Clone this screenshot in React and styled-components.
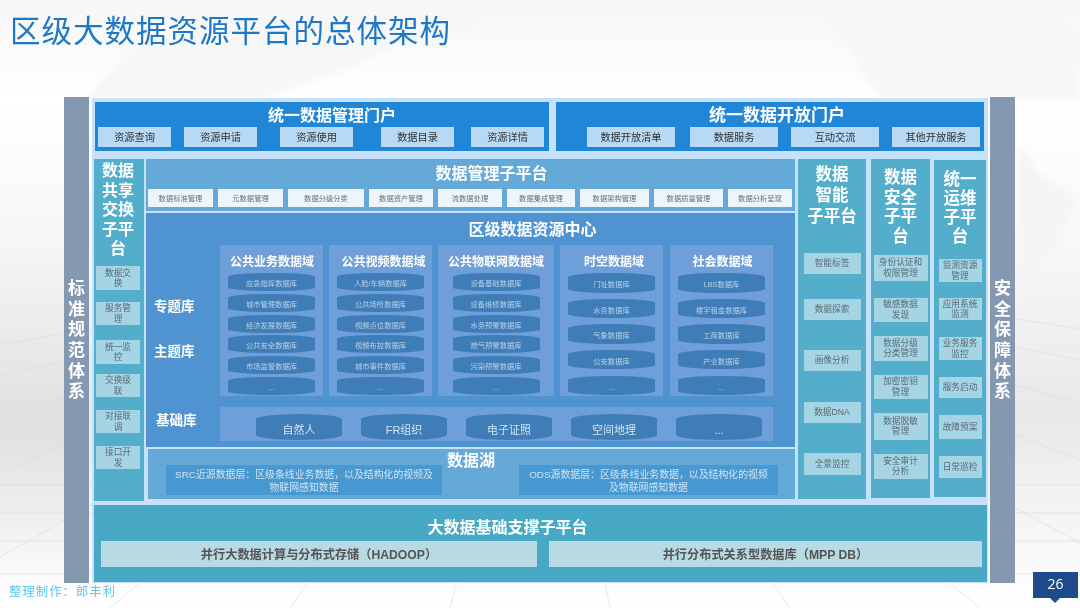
import React from 'react';
import styled, { createGlobalStyle } from 'styled-components';

const GlobalStyle = createGlobalStyle`
    html, body {
        margin: 0;
        padding: 0;
        background: #fff;
    }
    body {
        font-family: "Liberation Sans", "Noto Sans CJK SC", sans-serif;
    }
`;

const Page = styled.div`
    position: relative;
    width: 1080px;
    height: 608px;
    overflow: hidden;
    background: #fff;
    filter: blur(0.35px);
`;

const Backdrop = styled.svg`
    position: absolute;
    left: 0;
    top: 0;
`;

const Heading = styled.h1`
    position: relative;
    height: 97px;
    margin: 0;
    padding-left: 10px;
    box-sizing: border-box;
    font-size: 30.5px;
    line-height: 62px;
    font-weight: 400;
    letter-spacing: 1px;
    color: #1d78c8;
`;

const Frame = styled.div`
    position: relative;
    display: flex;
    width: 951px;
    height: 486px;
    margin-left: 64px;
`;

const SideBar = styled.div`
    width: 25px;
    flex: none;
    display: flex;
    flex-direction: column;
    align-items: center;
    justify-content: center;
    padding-top: 2px;
    box-sizing: border-box;
    background: #8598b2;
    color: #fff;
    font-size: 17px;
    font-weight: 700;
    line-height: 20.7px;
`;

const Center = styled.div`
    width: 896px;
    flex: none;
    margin: 1px 2px 0 3px;
    padding: 4px 1px 1px 2px;
    box-sizing: border-box;
    background: #c6e1fb;
`;

const TopRow = styled.div`
    display: flex;
    margin-left: 1px;
    height: 49px;
`;

const Portal = styled.div`
    width: ${p => p.$w}px;
    margin-left: ${p => p.$ml || 0}px;
    background: #1f86d8;
`;

const PortalTitle = styled.div`
    height: 25px;
    padding-left: ${p => p.$pl}px;
    text-align: center;
    font-size: ${p => p.$size}px;
    line-height: 27px;
    font-weight: 700;
    color: #fff;
`;

const PortalChips = styled.div`
    display: flex;
`;

const PortalChip = styled.div`
    width: ${p => p.$w}px;
    height: 20px;
    margin-left: ${p => p.$ml}px;
    background: #b8d9f3;
    color: #333;
    font-size: 10.2px;
    line-height: 21px;
    text-align: center;
`;

const MiddleRow = styled.div`
    display: flex;
    align-items: flex-start;
    margin-top: 8px;
    height: 340px;
`;

const SidePanel = styled.div`
    flex: none;
    display: flex;
    flex-direction: column;
    align-items: center;
    width: ${p => p.$w}px;
    height: ${p => p.$h}px;
    margin-left: ${p => p.$ml || 0}px;
    margin-top: ${p => p.$mt || 0}px;
    padding-top: ${p => p.$pt}px;
    padding-right: ${p => p.$pr || 0}px;
    box-sizing: border-box;
    background: #53aecb;
`;

const SideTitle = styled.div`
    font-size: ${p => p.$size}px;
    line-height: ${p => p.$lh}px;
    font-weight: 700;
    color: #fff;
    text-align: center;
`;

const SideChip = styled.div`
    display: flex;
    align-items: center;
    justify-content: center;
    flex: none;
    box-sizing: border-box;
    width: ${p => p.$w}px;
    height: ${p => p.$h}px;
    margin-top: ${p => p.$gap}px;
    background: #a5d4e4;
    color: #5b6a74;
    font-size: 8.7px;
    line-height: 10.5px;
    text-align: center;
    white-space: pre-line;
`;

const MainColumn = styled.div`
    flex: none;
    width: 649px;
    margin-left: 2px;
    display: flex;
    flex-direction: column;
    gap: 2px;
`;

const Management = styled.div`
    height: 52px;
    background: #65a9d8;
    padding: 0 2px;
    box-sizing: border-box;
`;

const BandTitle = styled.div`
    padding-left: ${p => p.$pl || 0}px;
    padding-right: ${p => p.$pr || 0}px;
    text-align: center;
    color: #fff;
    font-size: 16px;
    font-weight: 700;
`;

const ManagementTitle = styled(BandTitle)`
    height: 30px;
    line-height: 29px;
`;

const ManagementChips = styled.div`
    display: flex;
    gap: 5px;
`;

const ManagementChip = styled.div`
    width: ${p => p.$w}px;
    height: 18px;
    background: #edf4fb;
    color: #6a6f75;
    font-size: 7.3px;
    line-height: 19px;
    text-align: center;
`;

const ResourceCenter = styled.div`
    height: 234px;
    background: #4f93d1;
`;

const ResourceTitle = styled(BandTitle)`
    height: 32px;
    line-height: 33px;
`;

const ResourceRow = styled.div`
    display: flex;
`;

const LabelColumn = styled.div`
    width: 74px;
    flex: none;
`;

const ShelfLabel = styled.div`
    color: #fff;
    font-size: 13.5px;
    font-weight: 700;
    line-height: 20px;
    margin-left: ${p => p.$ml}px;
    margin-top: ${p => p.$mt}px;
`;

const Domains = styled.div`
    display: flex;
`;

const Domain = styled.div`
    width: ${p => p.$w}px;
    height: 151px;
    margin-left: ${p => p.$ml || 0}px;
    background: #6f9fd8;
    display: flex;
    flex-direction: column;
    align-items: center;
`;

const DomainTitle = styled.div`
    height: 28px;
    padding: 6px 0 0 ${p => p.$pl || 0}px;
    box-sizing: border-box;
    color: #fff;
    font-size: 12px;
    font-weight: 700;
    line-height: 22px;
    white-space: nowrap;
`;

const DbStack = styled.div`
    height: 122px;
    display: flex;
    flex-direction: column;
    justify-content: space-between;
`;

const Cylinder = styled.div`
    width: ${p => p.$w || 87}px;
    height: ${p => p.$h}px;
    background: #3f7db8;
    border-radius: 50% / 20%;
    color: ${p => (p.$large ? '#d3e3f2' : '#b9d1e8')};
    font-size: ${p => (p.$large ? 11 : 7.3)}px;
    line-height: ${p => p.$h + (p.$large ? 6 : 4)}px;
    text-align: center;
    flex: none;
`;

const BaseShelf = styled.div`
    display: flex;
    width: 553px;
    height: 34px;
    margin-top: 11px;
    padding: 7px 0 0 36px;
    box-sizing: border-box;
    gap: 19px;
    background: #6f9fd8;
`;

const Lake = styled.div`
    height: 50px;
    margin-left: 2px;
    background: #65a9d8;
    display: flex;
    align-items: flex-start;
    padding: 0 17px 0 18px;
    box-sizing: border-box;
`;

const LakeTitle = styled.div`
    margin-left: 5px;
    color: #fff;
    font-size: 16px;
    font-weight: 700;
    line-height: 24px;
`;

const LakeBox = styled.div`
    width: ${p => p.$w}px;
    height: 30px;
    margin-top: 16px;
    margin-left: ${p => (p.$auto ? 'auto' : '0')};
    padding-top: 3px;
    box-sizing: border-box;
    background: #4898d2;
    color: #cfe3f3;
    font-size: 9.9px;
    line-height: 13px;
    text-align: center;
    white-space: pre-line;
`;

const BaseBand = styled.div`
    height: 77px;
    margin-top: 6px;
    background: #47a9c5;
`;

const BaseTitle = styled(BandTitle)`
    height: 36px;
    line-height: 45px;
`;

const BaseChips = styled.div`
    display: flex;
    gap: 12px;
    padding-left: 7px;
`;

const BaseChip = styled.div`
    width: ${p => p.$w}px;
    height: 26px;
    background: #b8dae4;
    color: #555;
    font-size: 12.2px;
    font-weight: 700;
    line-height: 28px;
    text-align: center;
`;

const Footer = styled.div`
    position: relative;
    margin-left: 9px;
    color: #5cc6ee;
    font-size: 12.4px;
    line-height: 19px;
    letter-spacing: 1px;
`;

const PageBadge = styled.div`
    position: absolute;
    left: 1033px;
    top: 572px;
    width: 45px;
    height: 26px;
    background: #1d4b8b;
    color: #fff;
    font-family: "Open Sans", "Liberation Sans", sans-serif;
    font-size: 14px;
    line-height: 24px;
    text-align: center;

    &::after {
        content: '';
        position: absolute;
        left: 17px;
        top: 26px;
        border: 5px solid transparent;
        border-top-color: #1d4b8b;
        border-bottom: none;
    }
`;

const portalChips = [
    { text: '资源查询', w: 73, ml: 3 },
    { text: '资源申请', w: 73, ml: 13 },
    { text: '资源使用', w: 73, ml: 23 },
    { text: '数据目录', w: 73, ml: 28 },
    { text: '资源详情', w: 73, ml: 17 },
];

const openChips = [
    { text: '数据开放清单', w: 88, ml: 31 },
    { text: '数据服务', w: 88, ml: 15 },
    { text: '互动交流', w: 88, ml: 13 },
    { text: '其他开放服务', w: 88, ml: 13 },
];

const managementChips = [
    ['数据标准管理', 65], ['元数据管理', 65], ['数据分级分类', 76], ['数据资产管理', 64], ['流数据处理', 64],
    ['数据集成管理', 68], ['数据架构管理', 69], ['数据质量管理', 69], ['数据分析呈现', 64],
];

const domains = [
    {
        title: '公共业务数据域', w: 103, ml: 0, pl: 1,
        dbs: ['应急指挥数据库', '城市管理数据库', '经济发展数据库', '公共安全数据库', '市场监管数据库', '...'],
    },
    {
        title: '公共视频数据域', w: 103, ml: 6, pl: 6,
        dbs: ['人脸/车辆数据库', '公共场所数据库', '视频点位数据库', '视频布控数据库', '城市事件数据库', '...'],
    },
    {
        title: '公共物联网数据域', w: 116, ml: 6,
        dbs: ['设备基础数据库', '设备维修数据库', '水务预警数据库', '燃气预警数据库', '污染预警数据库', '...'],
    },
    {
        title: '时空数据域', w: 103, ml: 6, h: 19.5, pl: 5,
        dbs: ['门址数据库', '水务数据库', '气象数据库', '公安数据库', '...'],
    },
    {
        title: '社会数据域', w: 103, ml: 7, h: 19.5, pl: 2,
        dbs: ['LBS数据库', '楼宇租金数据库', '工商数据库', '产业数据库', '...'],
    },
];

const baseDbs = ['自然人', 'FR组织', '电子证照', '空间地理', '...'];

const sharingChips = [
    ['数据交\n换', 24, 7.5], ['服务管\n理', 23, 12], ['统一监\n控', 24, 15],
    ['交换级\n联', 23, 10], ['对接联\n调', 23, 13], ['接口开\n发', 23, 13],
];

const smartChips = [
    ['智能标签', 21, 26.5], ['数据探索', 21, 25], ['画像分析', 21, 30],
    ['数据DNA', 21, 31], ['全景监控', 22, 30],
];

const securityChips = [
    ['身份认证和\n权限管理', 26, 8], ['敏感数据\n发现', 24, 17], ['数据分级\n分类管理', 25, 14],
    ['加密密钥\n管理', 24, 14], ['数据脱敏\n管理', 27, 14], ['安全审计\n分析', 25, 14],
];

const opsChips = [
    ['监测资源\n管理', 23, 13.5], ['应用系统\n监测', 22, 16], ['业务服务\n监控', 23, 17],
    ['服务启动', 21, 17], ['故障预案', 24, 17], ['日常巡检', 22, 17],
];

const floorRays = [-1500, -1000, -620, -330, -90, 110, 290, 450, 610, 790, 980, 1200, 1460, 1800, 2300, 3000];
const floorLines = [485, 513, 541, 574];

const Scenery = () => (
    <Backdrop width="1080" height="608" viewBox="0 0 1080 608">
        <defs>
            <linearGradient id="wall" x1="0" y1="0" x2="0" y2="1">
                <stop offset="0" stopColor="#f6f6f6" />
                <stop offset="0.16" stopColor="#ffffff" />
                <stop offset="0.4" stopColor="#f8f8f8" />
                <stop offset="0.68" stopColor="#e8e8e8" />
                <stop offset="0.78" stopColor="#efefef" />
                <stop offset="1" stopColor="#ffffff" />
            </linearGradient>
            <linearGradient id="edge" x1="0" y1="0" x2="0" y2="1">
                <stop offset="0" stopColor="#ffffff" stopOpacity="0" />
                <stop offset="0.65" stopColor="#d8d8d8" stopOpacity="0.55" />
                <stop offset="0.85" stopColor="#e8e8e8" stopOpacity="0.3" />
                <stop offset="1" stopColor="#ffffff" stopOpacity="0" />
            </linearGradient>
            <filter id="soft" x="-10%" y="-10%" width="120%" height="120%">
                <feGaussianBlur stdDeviation="3" />
            </filter>
        </defs>
        <rect x="0" y="0" width="1080" height="608" fill="url(#wall)" />
        <rect x="0" y="100" width="64" height="508" fill="url(#edge)" />
        <g filter="url(#soft)">
            <path d="M85 100 L130 50 L170 30 L260 0 L500 0 L470 30 L400 45 L345 70 L260 100 Z" fill="#f7f7f7" />
            <path d="M815 0 L1000 0 L1080 30 L1080 100 L880 100 L850 50 Z" fill="#f7f7f7" />
            <path d="M1018 150 L1030 155 L1035 170 L1050 180 L1078 200 L1065 225 L1060 250 L1040 265 L1030 290 L1018 302 Z" fill="#f5f5f5" />
        </g>
        <g stroke="#d8d8d8" strokeWidth="1" fill="none" strokeOpacity="0.55">
            {floorRays.map(x => <line key={x} x1="540" y1="250" x2={x} y2="608" />)}
            {floorLines.map(y => <line key={y} x1="0" y1={y} x2="1080" y2={y} />)}
        </g>
    </Backdrop>
);

const App = () => (
    <Page>
        <GlobalStyle />
        <Scenery />
        <Heading>区级大数据资源平台的总体架构</Heading>
        <Frame>
            <SideBar>
                {'标准规范体系'.split('').map(c => <span key={c}>{c}</span>)}
            </SideBar>
            <Center>
                <TopRow>
                    <Portal $w={454}>
                        <PortalTitle $size={16} $pl={20}>统一数据管理门户</PortalTitle>
                        <PortalChips>
                            {portalChips.map(c => (
                                <PortalChip key={c.text} $w={c.w} $ml={c.ml}>{c.text}</PortalChip>
                            ))}
                        </PortalChips>
                    </Portal>
                    <Portal $w={428} $ml={7}>
                        <PortalTitle $size={17} $pl={14}>统一数据开放门户</PortalTitle>
                        <PortalChips>
                            {openChips.map(c => (
                                <PortalChip key={c.text} $w={c.w} $ml={c.ml}>{c.text}</PortalChip>
                            ))}
                        </PortalChips>
                    </Portal>
                </TopRow>
                <MiddleRow>
                    <SidePanel $w={50} $h={342} $pt={2} $pr={2}>
                        <SideTitle $size={16} $lh={19.5}>数据<br />共享<br />交换<br />子平<br />台</SideTitle>
                        {sharingChips.map(([text, h, gap]) => (
                            <SideChip key={text} $w={44} $h={h} $gap={gap}>{text}</SideChip>
                        ))}
                    </SidePanel>
                    <MainColumn>
                        <Management>
                            <ManagementTitle $pl={42}>数据管理子平台</ManagementTitle>
                            <ManagementChips>
                                {managementChips.map(([text, w]) => (
                                    <ManagementChip key={text} $w={w}>{text}</ManagementChip>
                                ))}
                            </ManagementChips>
                        </Management>
                        <ResourceCenter>
                            <ResourceTitle $pl={124}>区级数据资源中心</ResourceTitle>
                            <ResourceRow>
                                <LabelColumn>
                                    <ShelfLabel $ml={8} $mt={52}>专题库</ShelfLabel>
                                    <ShelfLabel $ml={8} $mt={25}>主题库</ShelfLabel>
                                </LabelColumn>
                                <Domains>
                                    {domains.map(d => (
                                        <Domain key={d.title} $w={d.w} $ml={d.ml}>
                                            <DomainTitle $pl={d.pl}>{d.title}</DomainTitle>
                                            <DbStack>
                                                {d.dbs.map(db => (
                                                    <Cylinder key={db} $h={d.h || 18}>{db}</Cylinder>
                                                ))}
                                            </DbStack>
                                        </Domain>
                                    ))}
                                </Domains>
                            </ResourceRow>
                            <ResourceRow>
                                <LabelColumn>
                                    <ShelfLabel $ml={10} $mt={15}>基础库</ShelfLabel>
                                </LabelColumn>
                                <BaseShelf>
                                    {baseDbs.map(db => (
                                        <Cylinder key={db} $w={86} $h={26} $large>{db}</Cylinder>
                                    ))}
                                </BaseShelf>
                            </ResourceRow>
                        </ResourceCenter>
                        <Lake>
                            <LakeBox $w={276}>{'SRC近源数据层：区级条线业务数据，以及结构化的视频及\n物联网感知数据'}</LakeBox>
                            <LakeTitle>数据湖</LakeTitle>
                            <LakeBox $w={259} $auto>{'ODS源数据层：区级条线业务数据，以及结构化的视频\n及物联网感知数据'}</LakeBox>
                        </Lake>
                    </MainColumn>
                    <SidePanel $w={68} $h={340} $ml={3} $pt={4.5}>
                        <SideTitle $size={16.5} $lh={21}>数据<br />智能<br />子平台</SideTitle>
                        {smartChips.map(([text, h, gap]) => (
                            <SideChip key={text} $w={57} $h={h} $gap={gap}>{text}</SideChip>
                        ))}
                    </SidePanel>
                    <SidePanel $w={59} $h={339} $ml={5} $pt={9}>
                        <SideTitle $size={16.5} $lh={19.7}>数据<br />安全<br />子平<br />台</SideTitle>
                        {securityChips.map(([text, h, gap]) => (
                            <SideChip key={text} $w={54} $h={h} $gap={gap}>{text}</SideChip>
                        ))}
                    </SidePanel>
                    <SidePanel $w={52} $h={337} $ml={4} $mt={1} $pt={9.5}>
                        <SideTitle $size={16.5} $lh={19}>统一<br />运维<br />子平<br />台</SideTitle>
                        {opsChips.map(([text, h, gap]) => (
                            <SideChip key={text} $w={43} $h={h} $gap={gap}>{text}</SideChip>
                        ))}
                    </SidePanel>
                </MiddleRow>
                <BaseBand>
                    <BaseTitle $pr={66}>大数据基础支撑子平台</BaseTitle>
                    <BaseChips>
                        <BaseChip $w={436}>并行大数据计算与分布式存储（HADOOP）</BaseChip>
                        <BaseChip $w={433}>并行分布式关系型数据库（MPP DB）</BaseChip>
                    </BaseChips>
                </BaseBand>
            </Center>
            <SideBar>
                {'安全保障体系'.split('').map(c => <span key={c}>{c}</span>)}
            </SideBar>
        </Frame>
        <Footer>整理制作：郎丰利</Footer>
        <PageBadge>26</PageBadge>
    </Page>
);

export default App;
